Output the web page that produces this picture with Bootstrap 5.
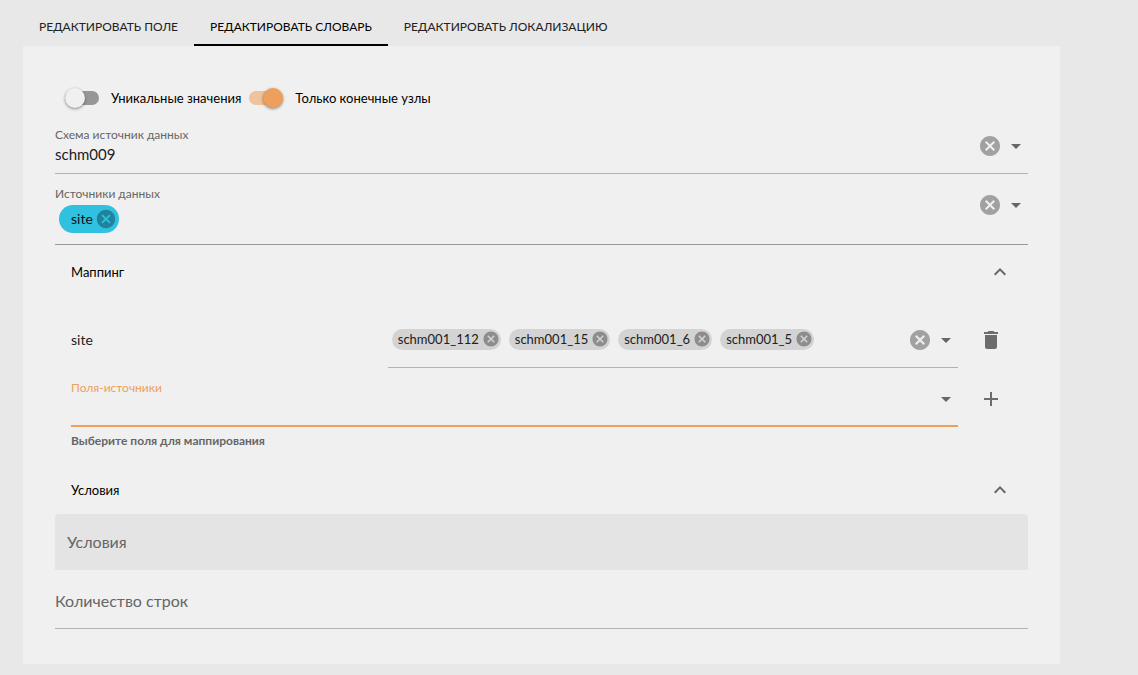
<!DOCTYPE html>
<html lang="ru">
<head>
<meta charset="utf-8">
<meta name="viewport" content="width=device-width, initial-scale=1">
<title>Редактировать словарь</title>
<link href="https://cdn.jsdelivr.net/npm/bootstrap@5.3.0/dist/css/bootstrap.min.css" rel="stylesheet">
<style>
  :root { --accent: #ed9f5b; --muted: #666; --line: #b3b3b3; }
  body { background: #e8e8e8; color: #212121; font-family: Lato, "Noto Sans", sans-serif; font-size: 14px; line-height: 20px; }
  .page { padding: 8px 78px 11px 23px; }
  .tab-link { display: block; padding: 9px 16px 7px; border-bottom: 2px solid transparent; font-size: 12px; color: #212121; text-decoration: none; white-space: nowrap; }
  .tab-link.active { border-color: #000; color: #000; }
  .panel { background: #f0f0f0; padding: 32px; }
  .switch-row { min-height: 40px; padding-left: 10px; gap: 8px; }
  .switch { gap: 12px; color: #000; font-size: 13px; }
  .switch input { appearance: none; margin: 0; width: 34px; height: 14px; border-radius: 7px; background: #979797; position: relative; }
  .switch input::before { content: ""; position: absolute; top: -3px; left: 0; width: 20px; height: 20px; border-radius: 50%; background: #f0f0f0; box-shadow: 0 1px 3px rgba(0,0,0,.45); }
  .switch input:checked { background: #efc39c; }
  .switch input:checked::before { left: 14px; background: var(--accent); }
  .field { display: flex; min-height: 56px; margin-bottom: 3px; border-bottom: 1px solid var(--line); }
  .field-main { flex: 1; min-width: 0; padding-top: 9px; }
  .field-main label { display: block; font-size: 12px; line-height: 16px; color: var(--muted); }
  .field-tall { min-height: 68px; border-color: #999; }
  .field-focus { border-bottom: 2px solid var(--accent); margin-bottom: 0; }
  .field-focus .field-main label { color: var(--accent); }
  .plain { appearance: none; border: 0; background: transparent; padding: 0; color: inherit; width: 100%; height: 22px; outline: 0; font-size: 15px; line-height: 22px; }
  .tools { height: 54px; gap: 2px; color: #666; }
  .field-main + .tools { padding-top: 2px; }
  .icon-btn { border: 0; background: transparent; padding: 0; display: flex; color: inherit; }
  .icon-btn svg { width: 24px; height: 24px; fill: currentColor; }
  .icon-btn.clear { color: #a1a1a1; }
  .chip { display: inline-flex; align-items: center; background: #d3d3d3; border-radius: 11px; height: 21px; padding: 0 1px 0 6px; gap: 3px; font-size: 13px; }
  .chip .icon-btn svg { width: 18px; height: 18px; }
  .chip .icon-btn { color: #8d8d8d; }
  .chip-main { background: #30c0e0; border-radius: 14px; height: 28px; margin: 3px 4px 0; padding: 0 2px 0 12px; gap: 2px; font-size: 14px; color: #111; }
  .chip-main .icon-btn svg { width: 22px; height: 22px; }
  .chip-main .icon-btn { color: #20829b; }
  .section-head { height: 48px; width: 100%; padding: 0 16px; font-size: 13px; color: #000; }
  .section-head svg { color: #666; }
  .map-grid { display: grid; grid-template-columns: 5fr 9fr 54px; }
  .map-name { line-height: 56px; }
  .side-btn { width: 42px; height: 56px; margin-left: 12px; align-items: center; justify-content: center; color: #6c6c6c; }
  .hint { min-height: 39px; padding-top: 6px; font-size: 12px; line-height: 16px; font-weight: 700; color: var(--muted); }
  .big { height: 54px; font-size: 16px; color: var(--muted); }
  .big::placeholder { color: var(--muted); opacity: 1; }
  .filled { height: 56px; margin-bottom: 3px; padding: 0 12px; background: #e4e4e4; border-radius: 4px 4px 0 0; }
</style>
</head>
<body>
<svg class="d-none" aria-hidden="true">
  <symbol id="cancel" viewBox="0 0 24 24"><path d="M12 2C6.47 2 2 6.47 2 12s4.47 10 10 10 10-4.47 10-10S17.53 2 12 2zm5 13.59L15.59 17 12 13.41 8.41 17 7 15.59 10.59 12 7 8.41 8.41 7 12 10.59 15.59 7 17 8.41 13.41 12 17 15.59z"/></symbol>
  <symbol id="drop" viewBox="0 0 24 24"><path d="M7 10l5 5 5-5z"/></symbol>
  <symbol id="less" viewBox="0 0 24 24"><path d="M12 8l-6 6 1.41 1.41L12 10.83l4.59 4.58L18 14z"/></symbol>
  <symbol id="trash" viewBox="0 0 24 24"><path d="M6 19c0 1.1.9 2 2 2h8c1.1 0 2-.9 2-2V7H6v12zM19 4h-3.5l-1-1h-5l-1 1H5v2h14V4z"/></symbol>
  <symbol id="plus" viewBox="0 0 24 24"><path d="M19 13h-6v6h-2v-6H5v-2h6V5h2v6h6v2z"/></symbol>
</svg>

<main class="page">
  <nav class="d-flex">
    <a class="tab-link" href="#">РЕДАКТИРОВАТЬ ПОЛЕ</a>
    <a class="tab-link active" href="#" aria-current="page">РЕДАКТИРОВАТЬ СЛОВАРЬ</a>
    <a class="tab-link" href="#">РЕДАКТИРОВАТЬ ЛОКАЛИЗАЦИЮ</a>
  </nav>

  <form class="panel">
    <div class="switch-row d-flex align-items-center">
      <label class="switch d-flex align-items-center" for="uniq"><input type="checkbox" role="switch" id="uniq">Уникальные значения</label>
      <label class="switch d-flex align-items-center" for="leaf"><input type="checkbox" role="switch" id="leaf" checked>Только конечные узлы</label>
    </div>

    <div class="field">
      <div class="field-main">
        <label for="schema">Схема источник данных</label>
        <select class="plain" id="schema"><option>schm009</option></select>
      </div>
      <div class="tools d-flex align-items-center">
        <button type="button" class="icon-btn clear" aria-label="Очистить"><svg><use href="#cancel"/></svg></button>
        <button type="button" class="icon-btn" aria-label="Открыть"><svg><use href="#drop"/></svg></button>
      </div>
    </div>

    <div class="field field-tall">
      <div class="field-main">
        <label for="sources">Источники данных</label>
        <div class="d-flex">
          <span class="chip chip-main">site<button type="button" class="icon-btn" aria-label="Удалить site"><svg><use href="#cancel"/></svg></button></span>
          <input class="plain flex-fill" id="sources" type="text">
        </div>
      </div>
      <div class="tools d-flex align-items-center">
        <button type="button" class="icon-btn clear" aria-label="Очистить"><svg><use href="#cancel"/></svg></button>
        <button type="button" class="icon-btn" aria-label="Открыть"><svg><use href="#drop"/></svg></button>
      </div>
    </div>

    <button type="button" class="icon-btn section-head align-items-center justify-content-between" aria-expanded="true">Маппинг<svg><use href="#less"/></svg></button>
    <div class="px-3 pt-3">
      <div class="map-grid">
        <label class="map-name" for="mapped">site</label>
        <div class="field align-items-center">
          <div class="d-flex flex-fill gap-2 px-1">
            <span class="chip">schm001_112<button type="button" class="icon-btn" aria-label="Удалить schm001_112"><svg><use href="#cancel"/></svg></button></span>
            <span class="chip">schm001_15<button type="button" class="icon-btn" aria-label="Удалить schm001_15"><svg><use href="#cancel"/></svg></button></span>
            <span class="chip">schm001_6<button type="button" class="icon-btn" aria-label="Удалить schm001_6"><svg><use href="#cancel"/></svg></button></span>
            <span class="chip">schm001_5<button type="button" class="icon-btn" aria-label="Удалить schm001_5"><svg><use href="#cancel"/></svg></button></span>
            <input class="plain flex-fill" id="mapped" type="text" size="1">
          </div>
          <div class="tools d-flex align-items-center">
            <button type="button" class="icon-btn clear" aria-label="Очистить"><svg><use href="#cancel"/></svg></button>
            <button type="button" class="icon-btn" aria-label="Открыть"><svg><use href="#drop"/></svg></button>
          </div>
        </div>
        <button type="button" class="icon-btn side-btn" aria-label="Удалить"><svg><use href="#trash"/></svg></button>
      </div>
      <div class="d-flex">
        <div class="field field-focus flex-fill">
          <div class="field-main">
            <label for="fields">Поля-источники</label>
            <select class="plain" id="fields"><option></option></select>
          </div>
          <div class="tools d-flex align-items-center">
            <button type="button" class="icon-btn" aria-label="Открыть"><svg><use href="#drop"/></svg></button>
          </div>
        </div>
        <button type="button" class="icon-btn side-btn" aria-label="Добавить"><svg><use href="#plus"/></svg></button>
      </div>
      <div class="hint">Выберите поля для маппирования</div>
    </div>

    <button type="button" class="icon-btn section-head align-items-center justify-content-between" aria-expanded="true">Условия<svg><use href="#less"/></svg></button>
    <div class="filled"><input class="plain big" type="text" placeholder="Условия" aria-label="Условия"></div>
    <div class="field"><input class="plain big" type="text" placeholder="Количество строк" aria-label="Количество строк"></div>
  </form>
</main>
<script src="https://cdn.jsdelivr.net/npm/bootstrap@5.3.0/dist/js/bootstrap.bundle.min.js"></script>
</body>
</html>
